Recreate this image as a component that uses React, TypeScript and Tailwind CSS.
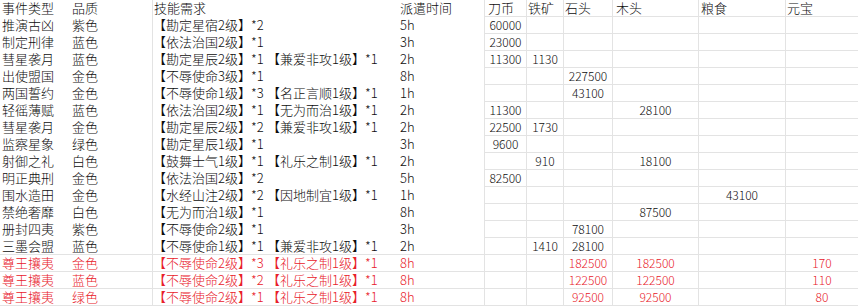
import React from "react";

type Row = {
  name: string;
  quality: string;
  skill1: string;
  skill2?: string;
  time: string;
  coin?: string;
  iron?: string;
  stone?: string;
  wood?: string;
  food?: string;
  ingot?: string;
  red?: boolean;
  lined?: boolean;
};

const rows: Row[] = [
  { name: "推演古凶", quality: "紫色", skill1: "【勘定星宿2级】*2", time: "5h", coin: "60000" },
  { name: "制定刑律", quality: "蓝色", skill1: "【依法治国2级】*1", time: "3h", coin: "23000" },
  { name: "彗星袭月", quality: "蓝色", skill1: "【勘定星辰2级】*1", skill2: "【兼爱非攻1级】*1", time: "2h", coin: "11300", iron: "1130" },
  { name: "出使盟国", quality: "金色", skill1: "【不辱使命3级】*1", time: "8h", stone: "227500" },
  { name: "两国誓约", quality: "金色", skill1: "【不辱使命1级】*3", skill2: "【名正言顺1级】*1", time: "1h", stone: "43100" },
  { name: "轻徭薄赋", quality: "蓝色", skill1: "【依法治国2级】*1", skill2: "【无为而治1级】*1", time: "2h", coin: "11300", wood: "28100" },
  { name: "彗星袭月", quality: "金色", skill1: "【勘定星辰2级】*2", skill2: "【兼爱非攻1级】*1", time: "2h", coin: "22500", iron: "1730" },
  { name: "监察星象", quality: "绿色", skill1: "【勘定星辰1级】*1", time: "3h", coin: "9600" },
  { name: "射御之礼", quality: "白色", skill1: "【鼓舞士气1级】*1", skill2: "【礼乐之制1级】*1", time: "2h", iron: "910", wood: "18100" },
  { name: "明正典刑", quality: "金色", skill1: "【依法治国2级】*2", time: "5h", coin: "82500" },
  { name: "围水造田", quality: "金色", skill1: "【水经山注2级】*2", skill2: "【因地制宜1级】*1", time: "1h", food: "43100" },
  { name: "禁绝奢靡", quality: "白色", skill1: "【无为而治1级】*1", time: "8h", wood: "87500" },
  { name: "册封四夷", quality: "紫色", skill1: "【不辱使命2级】*1", time: "3h", stone: "78100" },
  { name: "三墨会盟", quality: "蓝色", skill1: "【不辱使命1级】*1", skill2: "【兼爱非攻1级】*1", time: "2h", iron: "1410", stone: "28100", lined: true },
  { name: "尊王攘夷", quality: "金色", skill1: "【不辱使命2级】*3", skill2: "【礼乐之制1级】*1", time: "8h", stone: "182500", wood: "182500", ingot: "170", red: true, lined: true },
  { name: "尊王攘夷", quality: "蓝色", skill1: "【不辱使命2级】*2", skill2: "【礼乐之制1级】*1", time: "8h", stone: "122500", wood: "122500", ingot: "110", red: true, lined: true },
  { name: "尊王攘夷", quality: "绿色", skill1: "【不辱使命2级】*1", skill2: "【礼乐之制1级】*1", time: "8h", stone: "92500", wood: "92500", ingot: "80", red: true, lined: true },
];

// 数值列：居中，带网格线，数字略小
const numCell = "border-r border-b border-[#e3e3e3] text-center text-[12px]";

export default function App() {
  return (
    <div
      className="w-[858px] h-[306px] overflow-hidden bg-white text-[13px] leading-[16px] font-light text-[#0d0d0d]"
      style={{ fontFamily: '"Noto Sans CJK SC", "Noto Sans", sans-serif' }}
    >
      <div className="grid grid-cols-[70px_82px_246px_86px_43px_37px_49px_86px_87px_72px] auto-rows-[17px]">
        {/* 表头 */}
        <div className="pl-[2px]">事件类型</div>
        <div className="pl-[2px]">品质</div>
        <div className="border-l border-[#e3e3e3] pl-[1px]">技能需求</div>
        <div className="pl-[2px]">派遣时间</div>
        <div className="border-l border-r border-b border-[#e3e3e3] pl-[3px]">刀币</div>
        <div className="border-r border-b border-[#e3e3e3] pl-[1px]">铁矿</div>
        <div className="border-r border-b border-[#e3e3e3] pl-[1px]">石头</div>
        <div className="border-r border-b border-[#e3e3e3] pl-[3px]">木头</div>
        <div className="border-r border-b border-[#e3e3e3] pl-[2px]">粮食</div>
        <div className="border-b border-[#e3e3e3] pl-[1px]">元宝</div>

        {rows.map((r, i) => {
          const color = r.red ? "text-[#e8202a]" : "";
          // 底部几行左侧也有网格线
          const line = r.lined ? "border-b border-[#e3e3e3]" : "";
          return (
            <React.Fragment key={i}>
              <div className={`pl-[2px] ${line} ${color}`}>{r.name}</div>
              <div className={`pl-[2px] ${line} ${color}`}>{r.quality}</div>
              <div className={`border-l border-[#e3e3e3] flex whitespace-nowrap ${line} ${color}`}>
                <span className="w-[114px] shrink-0">{r.skill1}</span>
                {r.skill2 && <span>{r.skill2}</span>}
              </div>
              <div className={`pl-[2px] ${line} ${color}`}>{r.time}</div>
              <div className={`border-l ${numCell} ${color}`}>{r.coin}</div>
              <div className={`${numCell} ${color}`}>{r.iron}</div>
              <div className={`${numCell} ${color}`}>{r.stone}</div>
              <div className={`${numCell} ${color}`}>{r.wood}</div>
              <div className={`${numCell} ${color}`}>{r.food}</div>
              <div className={`border-b border-[#e3e3e3] text-center text-[12px] ${color}`}>{r.ingot}</div>
            </React.Fragment>
          );
        })}
      </div>
    </div>
  );
}
